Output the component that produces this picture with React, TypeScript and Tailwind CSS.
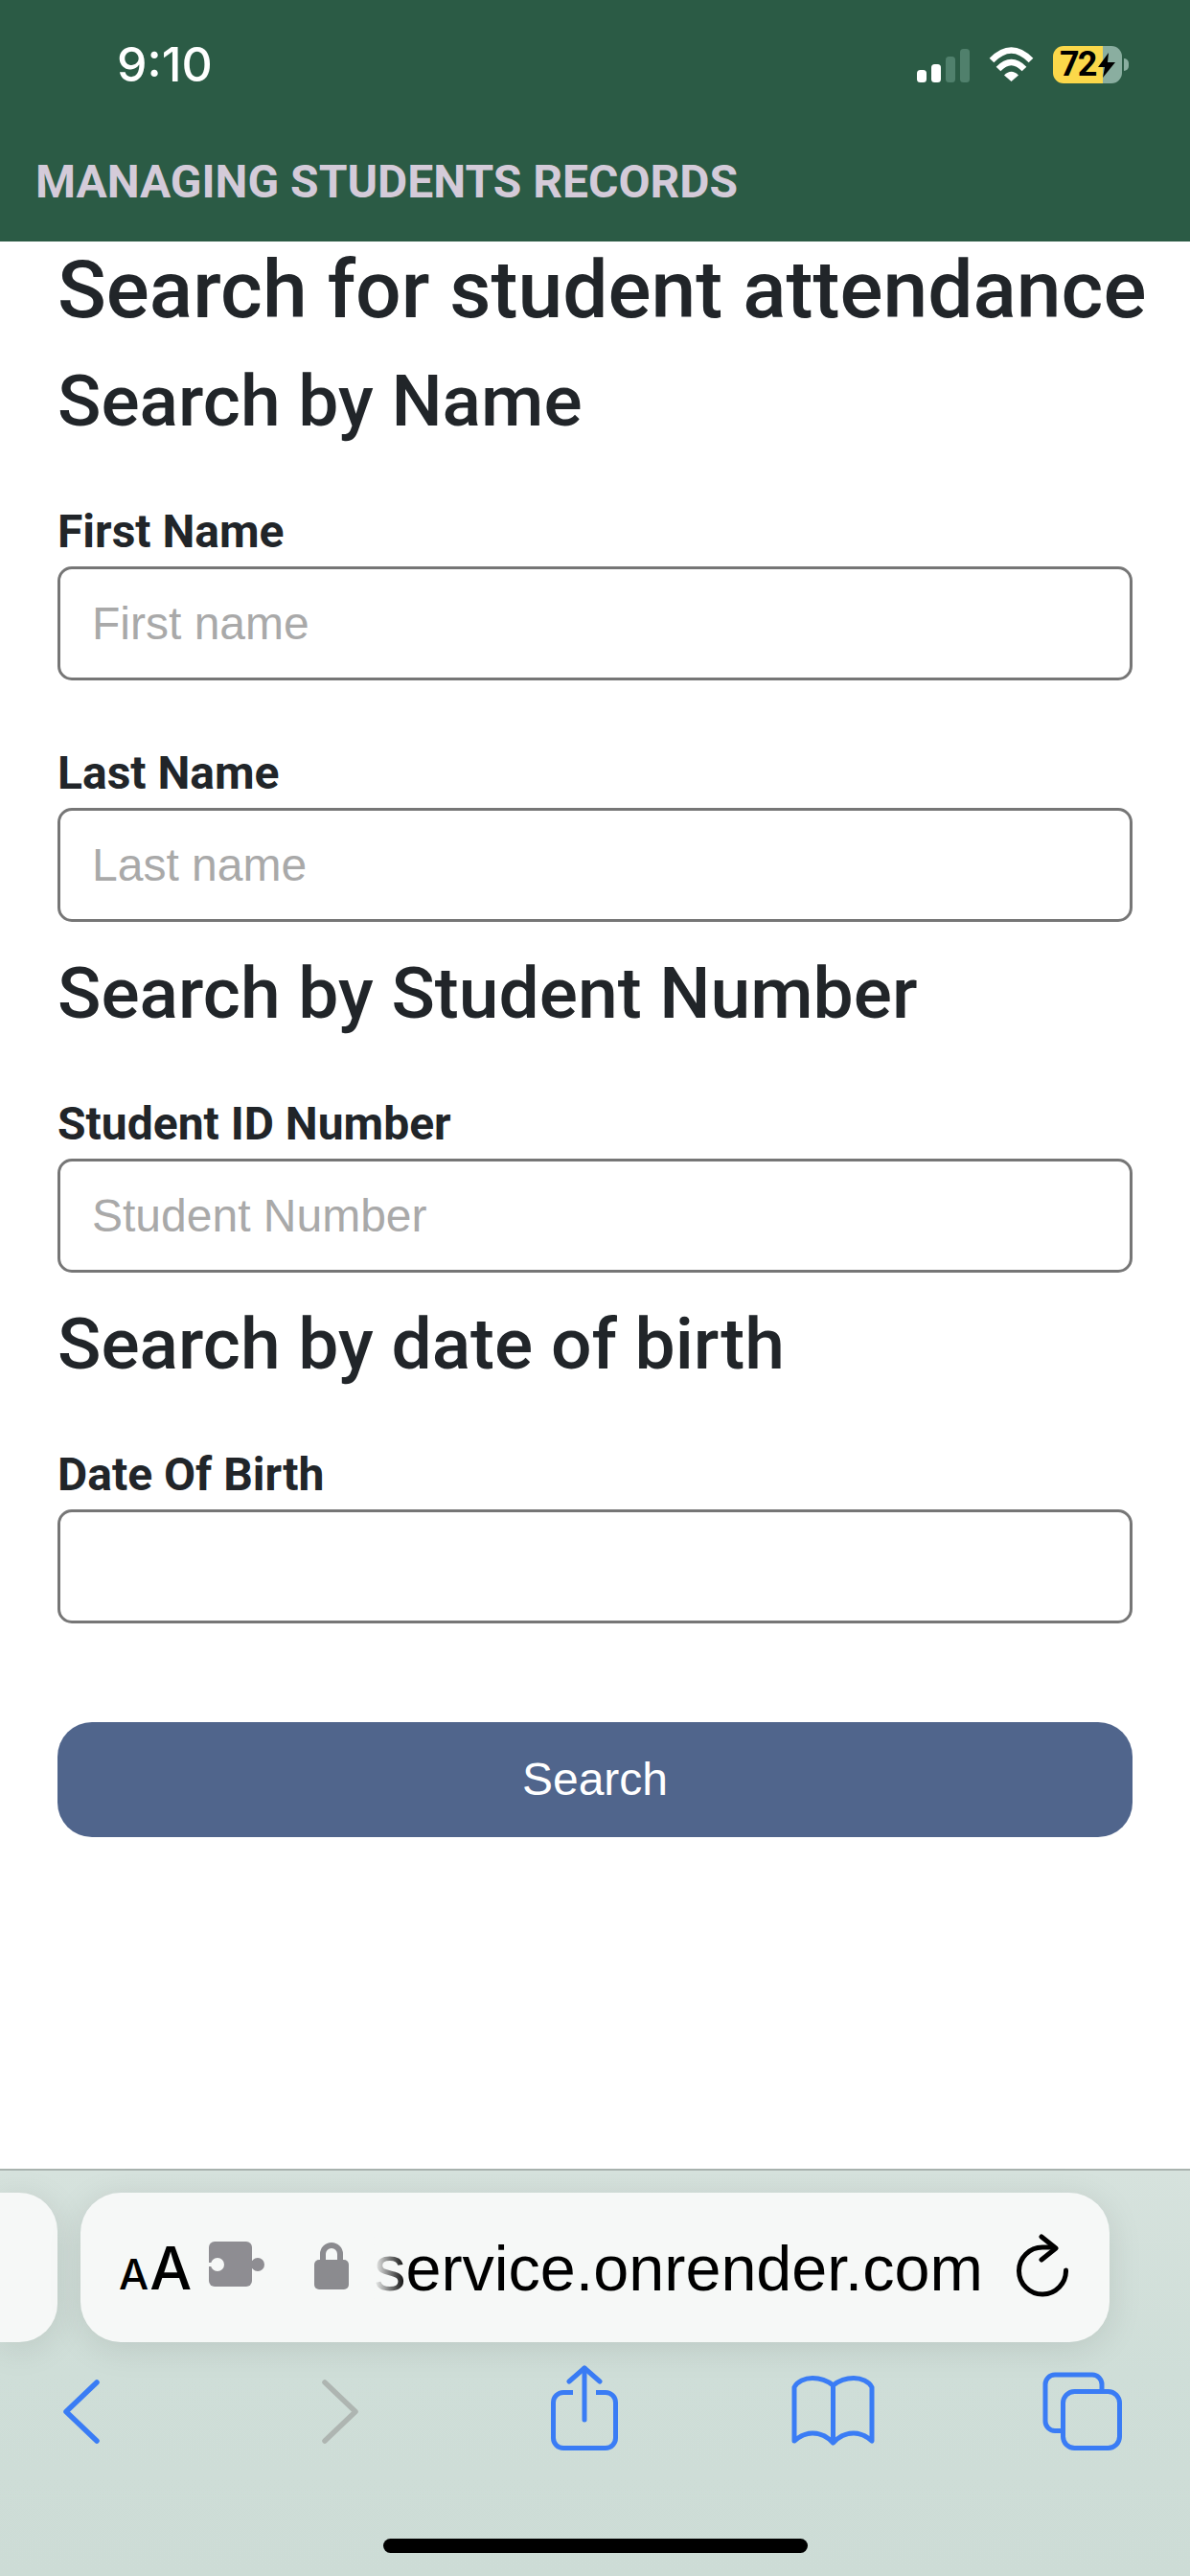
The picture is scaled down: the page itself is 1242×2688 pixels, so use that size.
export default function App() {
  const field = (label: string, placeholder: string, mt: string) => (
    <div className={mt}>
      <label className="block text-[48px] leading-[72px] font-bold text-[#212529]">{label}</label>
      <input
        placeholder={placeholder}
        className="block w-full h-[119px] border-[3px] border-[#767676] rounded-[15px] bg-white px-[33px] text-[48px] font-['Liberation_Sans',sans-serif] placeholder:text-[#a9a9a9] outline-none"
      />
    </div>
  );
  const h2 = "text-[75px] leading-[86px] font-medium text-[#212529]";
  return (
    <div className="w-[1242px] h-[2688px] flex flex-col bg-white overflow-hidden font-['Roboto',sans-serif]">
      <header className="h-[252px] bg-[#2b5b45] shrink-0">
        <div className="h-[134px] pl-[122px] flex items-center font-['Inter',sans-serif]">
          <span className="text-[50px] font-medium text-white leading-none">9:10</span>
          <div className="ml-auto flex items-center">
            <svg width="55" height="36" viewBox="0 0 55 36" className="mr-[20px] mt-[3px]">
              <rect x="0" y="22" width="10" height="13" rx="3.5" fill="#fff" />
              <rect x="15" y="16" width="10" height="19" rx="3.5" fill="#fff" />
              <rect x="30" y="8" width="10" height="27" rx="3.5" fill="#50806c" />
              <rect x="45" y="0" width="10" height="35" rx="3.5" fill="#50806c" />
            </svg>
            <svg width="47" height="36" viewBox="0 0 47 36" className="mr-[20px]">
              <path d="M3 14 Q23.5 -7 44 14" fill="none" stroke="#fff" strokeWidth="6.5" />
              <path d="M10 23 Q23.5 9 37 23" fill="none" stroke="#fff" strokeWidth="6.5" />
              <path d="M23.5 36 L16 29.5 Q23.5 22 31 29.5 Z" fill="#fff" />
            </svg>
            <div className="relative w-[72px] h-[39px] rounded-[11px] overflow-hidden flex">
              <div className="w-[52px] bg-[#fbd84a]" />
              <div className="flex-1 bg-[#8aaea0]" />
              <span className="absolute left-[7px] top-0 h-[39px] flex items-center text-[36px] font-bold text-black tracking-[-2px] font-['Roboto',sans-serif]">72</span>
              <svg width="18" height="26" viewBox="0 0 18 26" className="absolute left-[47px] top-[7px]">
                <path d="M11 0 L0 15 L7 15 L5 26 L18 10 L10 10 Z" fill="#000" />
              </svg>
            </div>
            <div className="ml-[2px] mr-[64px] w-[5px] h-[13px] rounded-r-full bg-[#8aaea0]" />
          </div>
        </div>
        <div className="pl-[37px] mt-[29px] text-[48px] leading-[54px] font-bold text-[#d4cbd9] uppercase">Managing Students Records</div>
      </header>

      <main className="flex-1 px-[60px]">
        <h1 className="text-[84px] leading-[101px] font-medium text-[#212529] whitespace-nowrap">Search for student attendance</h1>
        <h2 className={`${h2} mt-[22px]`}>Search by Name</h2>
        {field("First Name", "First name", "mt-[58px]")}
        {field("Last Name", "Last name", "mt-[61px]")}
        <h2 className={`${h2} mt-[31px]`}>Search by Student Number</h2>
        {field("Student ID Number", "Student Number", "mt-[58px]")}
        <h2 className={`${h2} mt-[31px]`}>Search by date of birth</h2>
        {field("Date Of Birth", "", "mt-[58px]")}
        <button className="block w-full h-[120px] mt-[103px] rounded-[36px] bg-[#50658c] text-white text-[48px] font-['Liberation_Sans',sans-serif]">Search</button>
      </main>

      <footer className="h-[425px] shrink-0 bg-gradient-to-b from-[#d6e2dd] via-[#cfded8] to-[#cddcd6] border-t-2 border-[#a9b3af] relative">
        <div className="flex gap-[24px] pt-[23px]">
          <div className="w-[60px] h-[156px] bg-[#f6f8f7] rounded-r-[40px] shadow-[0_6px_36px_rgba(0,0,0,0.1)]" />
          <div className="relative w-[1074px] h-[156px] bg-[#f6f8f7] rounded-[42px] shadow-[0_6px_36px_rgba(0,0,0,0.1)] flex items-center pl-[40px]">
            <span className="font-['Inter',sans-serif] text-black leading-none flex items-baseline mt-[2px] font-medium">
              <span className="text-[44px]">A</span>
              <span className="text-[62px] ml-[1px]">A</span>
            </span>
            <svg width="58" height="48" viewBox="0 0 58 48" className="ml-[18px] mt-[-6px]">
              <rect x="0" y="0" width="45" height="47" rx="6" fill="#8e8d92" />
              <circle cx="51" cy="24" r="7" fill="#8e8d92" />
              <rect x="43" y="20" width="4" height="8" fill="#8e8d92" />
              <circle cx="9" cy="24" r="7" fill="#f6f8f7" />
              <rect x="0" y="22" width="6" height="4" fill="#f6f8f7" />
            </svg>
            <svg width="36" height="52" viewBox="0 0 36 52" className="ml-[52px] mt-[-6px]">
              <path d="M9 24 V15 a9 9 0 0 1 18 0 V24" fill="none" stroke="#8b8b8f" strokeWidth="6" />
              <rect x="0" y="21" width="36" height="31" rx="5" fill="#8b8b8f" />
            </svg>
            <span className="relative ml-[26px] mt-[2px] text-[66.5px] leading-none text-black font-['Liberation_Sans',sans-serif] whitespace-nowrap">
              service.onrender.com
              <span className="absolute left-0 top-0 h-full w-[34px] bg-gradient-to-r from-[#f6f8f7] to-transparent" />
            </span>
            <svg width="54" height="66" viewBox="0 0 54 66" className="absolute left-[977px] top-[43px]">
              <path d="M51.5 38 A24.5 24.5 0 1 1 27 14 H38" fill="none" stroke="#000" strokeWidth="5" strokeLinecap="round" />
              <path d="M26 3 L41 15 L26 27" fill="none" stroke="#000" strokeWidth="5" strokeLinecap="round" strokeLinejoin="round" />
            </svg>
          </div>
        </div>
        <div className="flex items-start pl-[66px] mt-[24px]">
          <svg width="38" height="67" viewBox="0 0 38 67" className="mt-[15px]">
            <path d="M35 3 L3 33.5 L35 64" fill="none" stroke="#3a7cf5" strokeWidth="5.5" strokeLinecap="round" strokeLinejoin="round" />
          </svg>
          <svg width="38" height="67" viewBox="0 0 38 67" className="ml-[232px] mt-[15px]">
            <path d="M3 3 L35 33.5 L3 64" fill="none" stroke="#aeb5b1" strokeWidth="5.5" strokeLinecap="round" strokeLinejoin="round" />
          </svg>
          <svg width="70" height="89" viewBox="0 0 70 89" className="ml-[201px]">
            <path d="M35 3 V57" fill="none" stroke="#3a7cf5" strokeWidth="5" strokeLinecap="round" />
            <path d="M19 17 L35 3 L51 17" fill="none" stroke="#3a7cf5" strokeWidth="5" strokeLinecap="round" strokeLinejoin="round" />
            <path d="M23 28.5 H13 a10.5 10.5 0 0 0 -10.5 10.5 V76 a10.5 10.5 0 0 0 10.5 10.5 H57 a10.5 10.5 0 0 0 10.5 -10.5 V39 a10.5 10.5 0 0 0 -10.5 -10.5 H47" fill="none" stroke="#3a7cf5" strokeWidth="5" />
          </svg>
          <svg width="87" height="73" viewBox="0 0 87 73" className="ml-[181px] mt-[11px]">
            <path d="M43.5 10 C36 4 27 2.5 22 2.5 C14 2.5 6 6 3 12 V68 C10 62 16 60 22 60 C30 60 37 63 43.5 70 C50 63 57 60 65 60 C71 60 77 62 84 68 V12 C81 6 73 2.5 65 2.5 C60 2.5 51 4 43.5 10 V70" fill="none" stroke="#3a7cf5" strokeWidth="5" strokeLinejoin="round" strokeLinecap="round" />
          </svg>
          <svg width="83" height="82" viewBox="0 0 83 82" className="ml-[175px] mt-[7px]">
            <path d="M21 61.5 H13 a10 10 0 0 1 -10 -10 V13 a10 10 0 0 1 10 -10 H52 a10 10 0 0 1 10 10 V20" fill="none" stroke="#3a7cf5" strokeWidth="5" />
            <rect x="21.5" y="20.5" width="59" height="59" rx="12" fill="none" stroke="#3a7cf5" strokeWidth="5" />
          </svg>
        </div>
        <div className="absolute left-[400px] top-[384px] w-[443px] h-[15px] rounded-full bg-black" />
      </footer>
    </div>
  );
}
